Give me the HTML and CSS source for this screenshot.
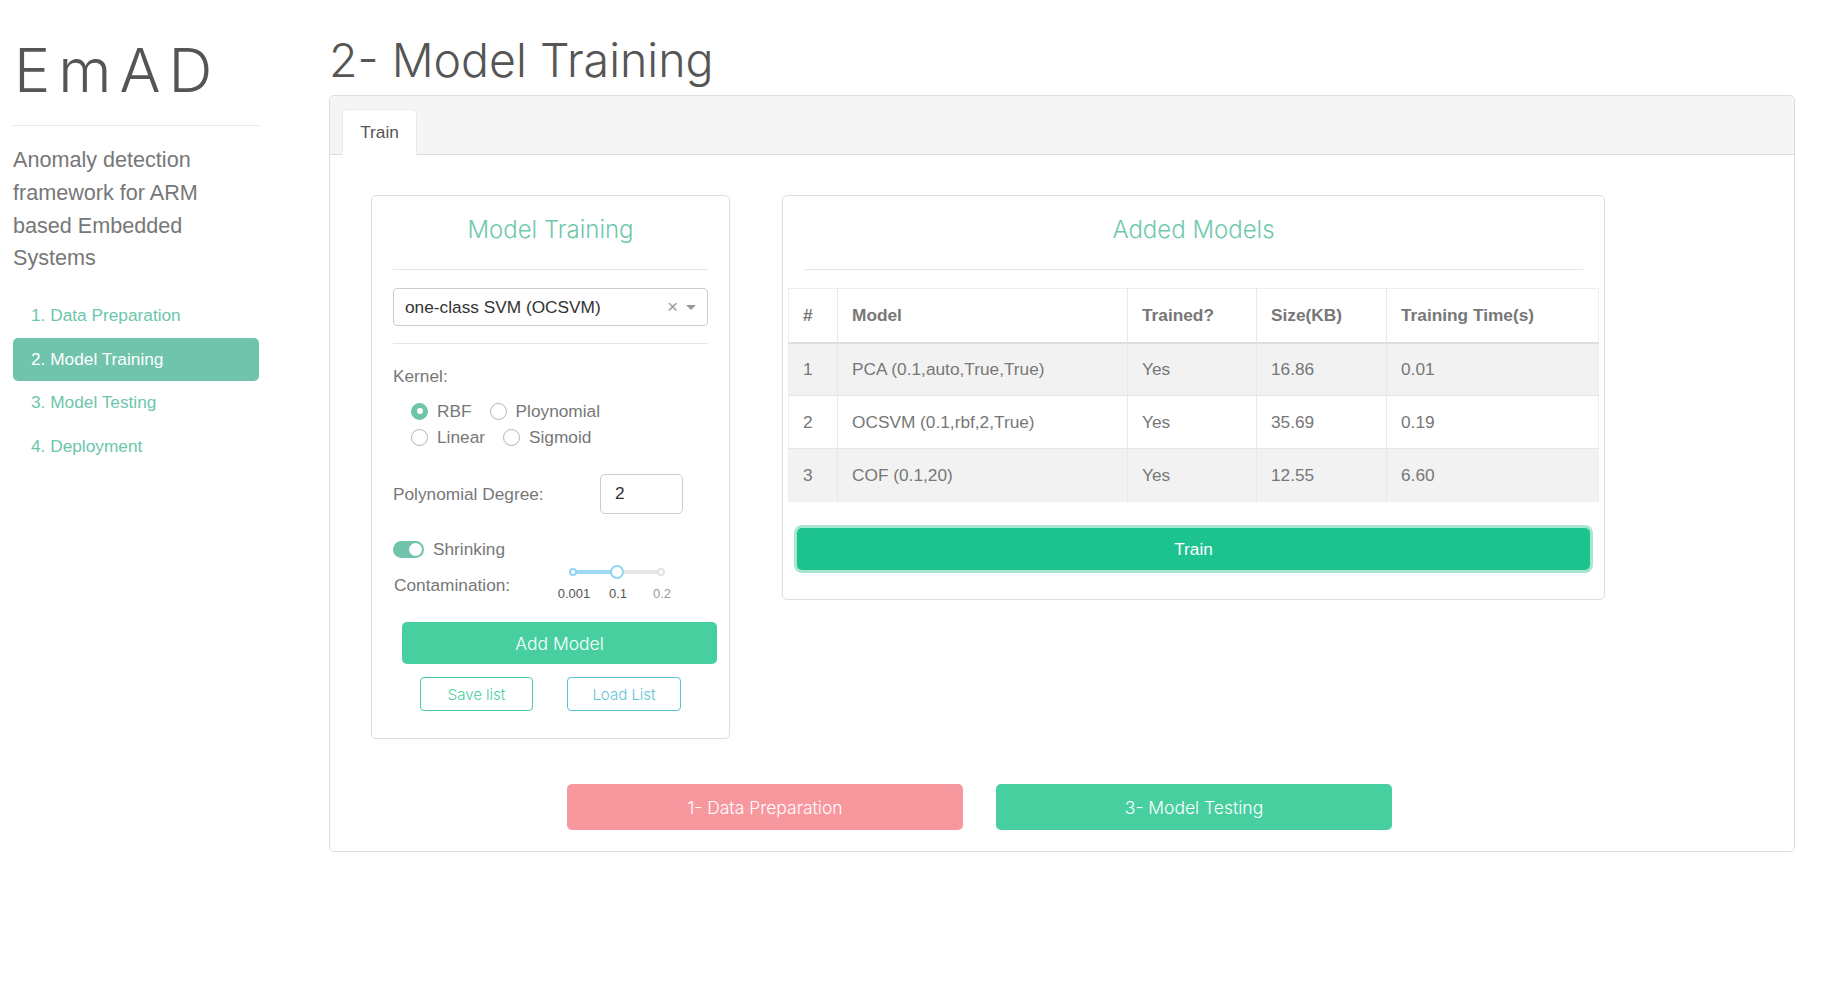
FILE: index.html
```html
<!DOCTYPE html>
<html lang="en">
<head>
<meta charset="utf-8">
<title>EmAD - Model Training</title>
<link rel="stylesheet" href="styles.css">
</head>
<body>
<div class="page">
  <aside class="sidebar">
    <div class="brand">EmAD</div>
    <div class="side-rule"></div>
    <p class="desc">Anomaly detection framework for ARM based Embedded Systems</p>
    <nav class="nav">
      <a class="nav-item">1. Data Preparation</a>
      <a class="nav-item active">2. Model Training</a>
      <a class="nav-item">3. Model Testing</a>
      <a class="nav-item">4. Deployment</a>
    </nav>
  </aside>

  <main class="main">
    <h1 class="page-title">2- Model Training</h1>
    <section class="tabs-card">
      <div class="tab-bar"><div class="tab">Train</div></div>
      <div class="tab-body">
        <div class="cards">
          <div class="card train-card">
            <div class="card-title">Model Training</div>
            <div class="rule"></div>
            <div class="select">
              <span class="select-value">one-class SVM (OCSVM)</span>
              <span class="select-clear">×</span>
              <span class="select-caret"></span>
            </div>
            <div class="rule rule-2"></div>
            <div class="field-label">Kernel:</div>
            <div class="radio-group">
              <div class="radio-row">
                <label class="radio"><span class="radio-dot checked"></span>RBF</label>
                <label class="radio"><span class="radio-dot"></span>Ploynomial</label>
              </div>
              <div class="radio-row">
                <label class="radio"><span class="radio-dot"></span>Linear</label>
                <label class="radio"><span class="radio-dot"></span>Sigmoid</label>
              </div>
            </div>
            <div class="degree-row">
              <span class="degree-label">Polynomial Degree:</span>
              <div class="num-input">2</div>
            </div>
            <div class="switch-row">
              <span class="switch"><span class="switch-knob"></span></span>
              <span>Shrinking</span>
            </div>
            <div class="contam-row">
              <span class="contam-label">Contamination:</span>
              <div class="slider">
                <div class="slider-track">
                  <div class="slider-fill"></div>
                  <span class="slider-end start"></span>
                  <span class="slider-handle"></span>
                  <span class="slider-end stop"></span>
                </div>
                <div class="slider-labels">
                  <span>0.001</span>
                  <span>0.1</span>
                  <span class="muted">0.2</span>
                </div>
              </div>
            </div>
            <button class="btn-add">Add Model</button>
            <div class="list-btns">
              <button class="btn-outline save">Save list</button>
              <button class="btn-outline load">Load List</button>
            </div>
          </div>

          <div class="card models-card">
            <div class="card-title">Added Models</div>
            <div class="rule models-rule"></div>
            <table class="models">
              <colgroup>
                <col class="c1"><col class="c2"><col class="c3"><col class="c4"><col class="c5">
              </colgroup>
              <thead>
                <tr><th>#</th><th>Model</th><th>Trained?</th><th>Size(KB)</th><th>Training Time(s)</th></tr>
              </thead>
              <tbody>
                <tr><td>1</td><td>PCA (0.1,auto,True,True)</td><td>Yes</td><td>16.86</td><td>0.01</td></tr>
                <tr><td>2</td><td>OCSVM (0.1,rbf,2,True)</td><td>Yes</td><td>35.69</td><td>0.19</td></tr>
                <tr><td>3</td><td>COF (0.1,20)</td><td>Yes</td><td>12.55</td><td>6.60</td></tr>
              </tbody>
            </table>
            <button class="btn-train">Train</button>
          </div>
        </div>

        <div class="step-btns">
          <button class="btn-step prev">1- Data Preparation</button>
          <button class="btn-step next">3- Model Testing</button>
        </div>
      </div>
    </section>
  </main>
</div>
</body>
</html>
```

FILE: styles.css
```css
* { box-sizing: border-box; }

body {
  margin: 0;
  background: #fff;
  color: #777;
  font-family: "Liberation Sans", Arial, sans-serif;
  font-size: 17.28px;
}

.page {
  display: flex;
  padding-left: 13px;
}

/* ---------- sidebar ---------- */
.sidebar {
  width: 246px;
  flex: none;
}

.brand {
  font-family: Inter, "Open Sans", sans-serif;
  font-weight: 300;
  font-size: 61px;
  line-height: 74px;
  color: #555;
  margin-top: 33px;
  margin-left: 1px;
  letter-spacing: 8px;
}

.side-rule {
  height: 1px;
  background: #e8e8e8;
  margin-top: 18px;
}

.desc {
  width: 225px;
  margin: 18px 0 0 0;
  font-size: 21.6px;
  line-height: 32.8px;
  color: #777;
}

.nav {
  margin-top: 19px;
  display: flex;
  flex-direction: column;
}

.nav-item {
  height: 43.6px;
  line-height: 43.6px;
  padding-left: 18px;
  color: #6cc6ac;
  font-size: 17.28px;
  border-radius: 5px;
}

.nav-item.active {
  background: #70c4ab;
  color: #fff;
}

/* ---------- main ---------- */
.main {
  margin-left: 70px;
  width: 1466px;
  flex: none;
  padding-top: 32px;
}

.page-title {
  margin: 0 0 7px 0;
  font-family: Inter, "Open Sans", sans-serif;
  font-weight: 300;
  font-size: 46.5px;
  line-height: 56px;
  color: #555;
}

.tabs-card {
  border: 1px solid #ddd;
  border-radius: 5px;
}

.tab-bar {
  height: 59px;
  background: #f5f5f5;
  border-bottom: 1px solid #ddd;
  border-radius: 5px 5px 0 0;
  padding: 13px 0 0 12px;
}

.tab {
  width: 75px;
  height: 46px;
  background: #fff;
  border: 1px solid #eaeaea;
  border-bottom: none;
  border-radius: 5px 5px 0 0;
  color: #555;
  text-align: center;
  line-height: 45px;
  font-size: 17.28px;
}

.tab-body {
  padding: 40px 0 21px 41px;
}

.cards {
  display: flex;
  align-items: flex-start;
  gap: 52px;
}

.card {
  border: 1px solid #ddd;
  border-radius: 5px;
  background: #fff;
}

.card-title {
  margin-top: 19px;
  height: 30px;
  line-height: 30px;
  text-align: center;
  font-family: Inter, "Open Sans", sans-serif;
  font-size: 24px;
  font-weight: 300;
  color: #6fc8ae;
}

.rule {
  height: 1px;
  background: #e5e5e5;
  margin-top: 24px;
}

/* ---------- left card ---------- */
.train-card {
  width: 359px;
  padding: 0 21px 27px 21px;
}

.select {
  margin-top: 18px;
  height: 38px;
  border: 1px solid #ccc;
  border-radius: 4px;
  display: flex;
  align-items: center;
  padding: 0 10px 0 11px;
  color: #333;
}

.select-value { flex: 1; }

.select-clear {
  color: #999;
  font-size: 19px;
  margin-right: 8px;
}

.select-caret {
  width: 0;
  height: 0;
  border-left: 5px solid transparent;
  border-right: 5px solid transparent;
  border-top: 5px solid #999;
  margin-right: 1px;
}

.rule-2 { margin-top: 17px; }

.field-label {
  margin-top: 20px;
  line-height: 24px;
}

.radio-group {
  margin-top: 10px;
  padding-left: 18px;
}

.radio-row {
  display: flex;
  height: 26px;
  align-items: center;
}

.radio {
  display: flex;
  align-items: center;
  margin-right: 18px;
}

.radio-dot {
  width: 17px;
  height: 17px;
  border: 1px solid #adb5bd;
  border-radius: 50%;
  background: #fff;
  margin-right: 9px;
  display: inline-flex;
  align-items: center;
  justify-content: center;
}

.radio-dot.checked {
  background: #70c4ab;
  border-color: #70c4ab;
}

.radio-dot.checked::after {
  content: "";
  width: 6px;
  height: 6px;
  border-radius: 50%;
  background: #fff;
}

.degree-row {
  margin-top: 24px;
  height: 40px;
  display: flex;
  align-items: center;
}

.degree-label { width: 207px; }

.num-input {
  width: 83px;
  height: 40px;
  border: 1px solid #ccc;
  border-radius: 5px;
  padding-left: 14px;
  line-height: 36px;
  color: #333;
}

.switch-row {
  margin-top: 23px;
  height: 24px;
  display: flex;
  align-items: center;
  gap: 9px;
}

.switch {
  width: 31px;
  height: 17px;
  border-radius: 9px;
  background: #70c4ab;
  display: flex;
  align-items: center;
  justify-content: flex-end;
  padding-right: 2px;
}

.switch-knob {
  width: 13px;
  height: 13px;
  border-radius: 50%;
  background: #fff;
}

.contam-row {
  margin-top: 3px;
  display: flex;
  align-items: flex-start;
}

.contam-label {
  width: 159px;
  margin-top: 9px;
  line-height: 24px;
  padding-left: 1px;
}

.slider { width: 132px; }

.slider-track {
  position: relative;
  margin-left: 21px;
  width: 88px;
  height: 16px;
}

.slider-track::before {
  content: "";
  position: absolute;
  left: 0;
  right: 0;
  top: 6px;
  height: 4px;
  border-radius: 2px;
  background: #e6e6e6;
}

.slider-fill {
  position: absolute;
  left: 0;
  width: 44px;
  top: 6px;
  height: 4px;
  background: #9edbf3;
}

.slider-end {
  position: absolute;
  top: 4px;
  width: 8px;
  height: 8px;
  border-radius: 50%;
  background: #fff;
}

.slider-end.start { left: -4px; border: 2px solid #8fd5f4; }
.slider-end.stop { right: -4px; border: 2px solid #e3e3e3; }

.slider-handle {
  position: absolute;
  left: 37px;
  top: 1px;
  width: 14px;
  height: 14px;
  border-radius: 50%;
  background: #fff;
  border: 2px solid #8fd5f4;
}

.slider-labels {
  display: flex;
  margin-top: 5px;
  height: 18px;
  line-height: 18px;
  font-size: 13px;
  color: #555;
}

.slider-labels span {
  width: 44px;
  text-align: center;
}

.slider-labels .muted { color: #999; }

.btn-add {
  display: block;
  margin: 19px 0 0 9px;
  width: 315px;
  height: 42px;
  border: none;
  border-radius: 5px;
  background: #48cfa0;
  color: #fff;
  font-family: Inter, "Open Sans", sans-serif;
  font-weight: 300;
  font-size: 17.5px;
}

.list-btns {
  margin: 13px 0 0 27px;
  display: flex;
  gap: 34px;
}

.btn-outline {
  width: 113px;
  height: 34px;
  background: #fff;
  border-radius: 4px;
  font-family: Inter, "Open Sans", sans-serif;
  font-weight: 300;
  font-size: 15px;
}

.btn-outline.save { border: 1px solid #48cfa0; color: #48cfa0; }
.btn-outline.load { width: 114px; border: 1px solid #5ec3d6; color: #5ec3d6; }

/* ---------- right card ---------- */
.models-card {
  width: 823px;
  padding: 0 0 29px 0;
}

.models-rule { margin: 24px 21px 0 22px; }

.models {
  margin: 18px 6px 0 5px;
  width: 810px;
  border-collapse: collapse;
  table-layout: fixed;
  border: 1px solid #eee;
  color: #777;
}

.models .c1 { width: 49px; }
.models .c2 { width: 290px; }
.models .c3 { width: 129px; }
.models .c4 { width: 130px; }
.models .c5 { width: 212px; }

.models th,
.models td {
  text-align: left;
  padding: 0 14px;
  border-left: 1px solid #e8e8e8;
  font-size: 17.28px;
  white-space: nowrap;
}

.models th:first-child,
.models td:first-child { border-left: none; }

.models th {
  height: 54px;
  font-weight: 700;
  border-bottom: 2px solid #ddd;
}

.models td {
  height: 53px;
  border-top: 1px solid #e6e6e6;
}

.models thead + tbody tr:first-child td { border-top: none; }

.models tbody tr:nth-child(odd) td { background: #f2f2f2; }

.btn-train {
  display: block;
  margin: 26px 14px 0 14px;
  width: 793px;
  height: 42px;
  border: none;
  border-radius: 5px;
  background: #1dc38e;
  color: #fff;
  font-family: "Liberation Sans", Arial, sans-serif;
  font-size: 17.28px;
  box-shadow: 0 0 0 3px #a9e6d2;
}

/* ---------- step buttons ---------- */
.step-btns {
  margin: 45px 0 0 196px;
  display: flex;
  gap: 33px;
}

.btn-step {
  width: 396px;
  height: 46px;
  border: none;
  border-radius: 5px;
  color: #fff;
  font-family: Inter, "Open Sans", sans-serif;
  font-weight: 300;
  font-size: 17.5px;
}

.btn-step.prev { background: #f7989e; }
.btn-step.next { background: #48cfa0; }
```
